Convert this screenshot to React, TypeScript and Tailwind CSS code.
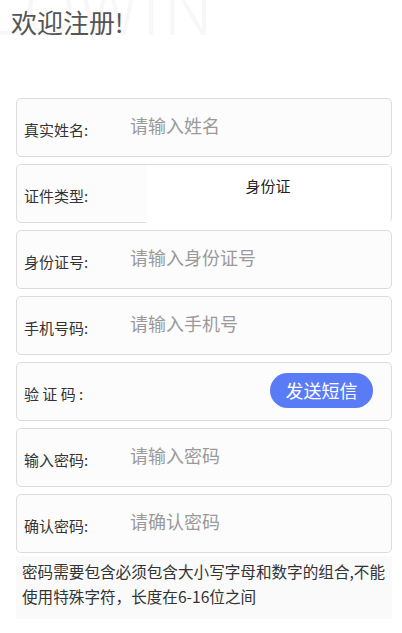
export default function App() {
  const fields = [
    { label: "真实姓名:", placeholder: "请输入姓名" },
    { label: "证件类型:", select: "身份证" },
    { label: "身份证号:", placeholder: "请输入身份证号" },
    { label: "手机号码:", placeholder: "请输入手机号" },
    { label: "验 证 码 :", button: "发送短信" },
    { label: "输入密码:", placeholder: "请输入密码" },
    { label: "确认密码:", placeholder: "请确认密码" },
  ];

  return (
    <div
      className="relative w-[402px] h-[633px] bg-white overflow-hidden"
      style={{ fontFamily: '"Noto Sans CJK SC", "Noto Sans", sans-serif' }}
    >
      {/* watermark */}
      <div
        aria-hidden
        className="absolute left-[-14px] top-[-32px] text-[72px] leading-none font-light text-[#f7f7f7] tracking-[2px] select-none"
      >
        LOWIN
      </div>

      <div className="relative">
        <h1 className="pl-[11px] pt-[5px] text-[26px] leading-[34px] text-[#555]">欢迎注册!</h1>

        <div className="ml-4 mr-[10px] mt-[59px] flex flex-col gap-[7px]">
          {fields.map((f) => (
            <div
              key={f.label}
              className="relative h-[59px] rounded-[5px] border border-[#dcdcdc] bg-[#fcfcfc] flex items-center"
            >
              <span className="pl-[7px] pt-[5px] text-[15px] text-[#333] w-[113px] shrink-0 whitespace-pre">
                {f.label}
              </span>
              {f.placeholder && (
                <span className="-mt-[5px] text-[18px] text-[#9a9a9a]">{f.placeholder}</span>
              )}
              {f.select && (
                <div className="absolute left-[129px] right-[1px] top-0 bottom-[-1px] bg-white flex justify-center pt-[10px]">
                  <span className="text-[15px] text-[#222]">{f.select}</span>
                </div>
              )}
              {f.button && (
                <div className="ml-auto mr-[18px] -mt-[3px] h-[35px] w-[103px] rounded-full bg-[#5a7bf6] text-white text-[18px] flex items-center justify-center">
                  {f.button}
                </div>
              )}
            </div>
          ))}
        </div>

        <div className="ml-4 mr-[10px] mt-[3px] h-[63px] bg-[#fafafa] pl-[6px] pt-[3px] text-[15.6px] leading-[25px] text-[#333]">
          密码需要包含必须包含大小写字母和数字的组合,不能使用特殊字符，长度在6-16位之间
        </div>
      </div>
    </div>
  );
}
